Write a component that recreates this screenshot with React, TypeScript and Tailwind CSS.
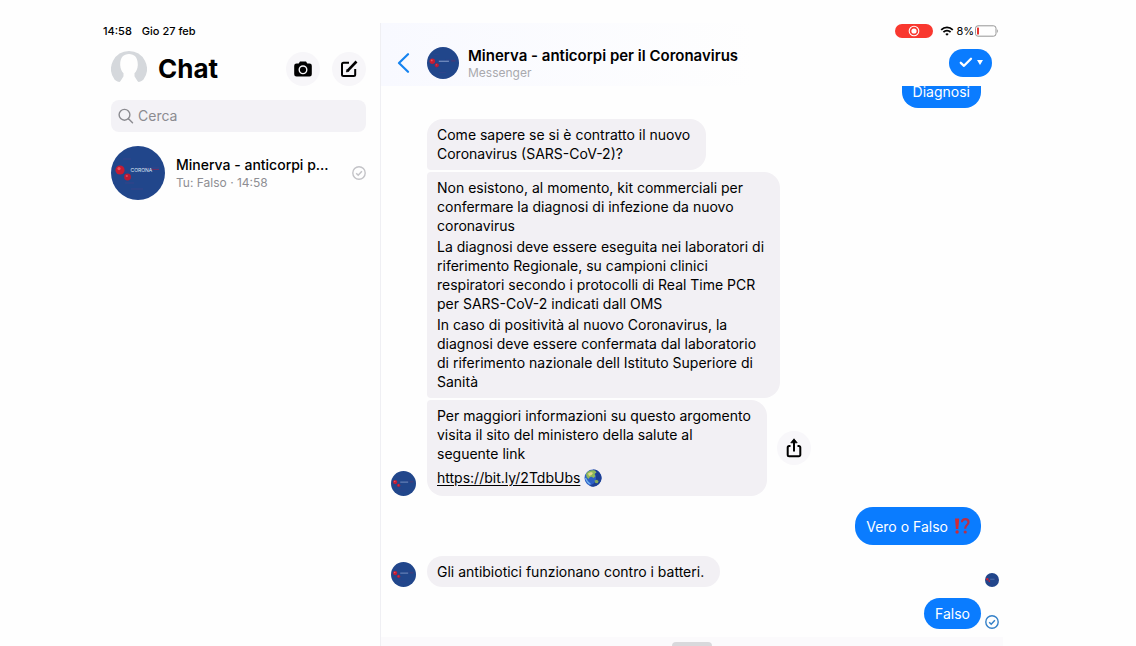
import { useState } from "react";

interface Message {
  id: number;
  paragraphs: string[];
  link?: string;
  shape: string;
}

const answers: Message[] = [
  {
    id: 1,
    paragraphs: ["Come sapere se si è contratto il nuovo\nCoronavirus (SARS-CoV-2)?"],
    shape: "rounded-2xl rounded-bl-sm",
  },
  {
    id: 2,
    paragraphs: [
      "Non esistono, al momento, kit commerciali per\nconfermare la diagnosi di infezione da nuovo\ncoronavirus",
      "La diagnosi deve essere eseguita nei laboratori di\nriferimento Regionale, su campioni clinici\nrespiratori secondo i protocolli di Real Time PCR\nper SARS-CoV-2 indicati dall OMS",
      "In caso di positività al nuovo Coronavirus, la\ndiagnosi deve essere confermata dal laboratorio\ndi riferimento nazionale dell Istituto Superiore di\nSanità",
    ],
    shape: "rounded-2xl rounded-l-sm",
  },
  {
    id: 3,
    paragraphs: [
      "Per maggiori informazioni su questo argomento\nvisita il sito del ministero della salute al\nseguente link",
    ],
    link: "https://bit.ly/2TdbUbs",
    shape: "rounded-2xl rounded-tl-sm",
  },
];

const PageLogo: React.FC<{ className: string; label?: boolean }> = ({ className, label }) => (
  <svg viewBox="0 0 54 54" className={`shrink-0 rounded-full ${className}`} aria-hidden="true">
    <rect width="54" height="54" fill="#21468b" />
    <path d="M14 37h9M32 22h16M20 43h12M12 13h8" stroke="#3c4289" strokeWidth="0.8" />
    <circle cx="9" cy="24" r="4.6" fill="#c41c33" />
    <circle cx="8" cy="22.6" r="1.6" fill="#f0505a" />
    <circle cx="16.5" cy="31" r="3.4" fill="#b81a35" />
    <circle cx="15.8" cy="30" r="1.1" fill="#e4485a" />
    {label ? (
      <text x="19.5" y="25.5" fontSize="5" fill="#dfe6f5" fontFamily="Inter, sans-serif">
        CORONA
      </text>
    ) : (
      <path d="M20 24h17" stroke="#8fa5d3" strokeWidth="1.6" />
    )}
    <path d="M41 23.5h7" stroke="#6b2f64" strokeWidth="1.2" />
  </svg>
);

const Globe: React.FC = () => (
  <svg viewBox="0 0 18 18" className="size-[18px]" aria-label="globo">
    <circle cx="9" cy="9" r="8.5" fill="#2d5fc4" />
    <path d="M9 .5a8.5 8.5 0 0 1 6 14.5 8.5 8.5 0 0 1-10 1.5c6-1 10-6 4-16z" fill="#1d3f93" />
    <path d="M2 5C4 1.500 8 .8 11 1.600l1.500 2-2 1.400 1 2.200-2 1.800-1.800-1.300-2 .6L4.500 10 2.600 8z" fill="#8fb85a" />
    <path d="M4 4.500 7 3l2 1-1.500 2L5 7z" fill="#e1d98a" />
    <path d="m10.500 11.500 2.500-.8 1.600 1.500-1 2-2.300-.3z" fill="#86ac5c" />
    <path d="M1.500 9c1 3 2.500 5 5 6.200" stroke="#75b5ee" strokeWidth="1.2" fill="none" />
  </svg>
);

const ExclamationQuestion: React.FC = () => (
  <svg viewBox="0 0 16 18" className="h-[18px] w-4" aria-label="punto esclamativo e interrogativo">
    <path d="M1 1.500h4.200L4.300 12H1.900z" fill="#d02a35" />
    <circle cx="3.1" cy="15" r="1.7" fill="#d02a35" />
    <path
      d="M8 5.200C8 3.200 9.400 2.200 11.200 2.200s3.300 1 3.300 3c0 2.600-3.200 3-3.200 5.800v.8"
      stroke="#b82f47"
      strokeWidth="2.2"
      fill="none"
    />
    <circle cx="11.2" cy="15" r="1.6" fill="#b82f47" />
  </svg>
);

const CheckCircle: React.FC<{ className: string }> = ({ className }) => (
  <svg viewBox="0 0 14 14" fill="none" stroke="currentColor" className={`size-3.5 shrink-0 ${className}`} aria-hidden="true">
    <circle cx="7" cy="7" r="6.2" strokeWidth="1.4" />
    <path d="m4.200 7.200 2 2 3.700-4" strokeWidth="1.5" />
  </svg>
);

const App: React.FC = () => {
  const [search, setSearch] = useState<string>("");

  return (
    <div className="flex h-screen overflow-hidden bg-[#fefefe] pt-[23px] pr-[133px] pl-[103px] font-[Inter,sans-serif] text-black">
      {/* Conversation list */}
      <aside className="flex w-[278px] shrink-0 flex-col border-r border-[#efeff3]">
        <div className="flex h-4 items-center gap-2.5 text-[11px] font-medium">
          <span>14:58</span>
          <span>Gio 27 feb</span>
        </div>

        <div className="mt-3 flex h-9 items-center pl-2">
          <svg viewBox="0 0 36 36" className="size-9 shrink-0" aria-hidden="true">
            <path
              d="M18 0a18 18 0 0 1 14.500 28.500c-1.500 1.500-3.500 2.500-5 2.500-1.500-1-2.500-3.500-4-5.700v-3c2-2 3-4.500 3.300-8C27 6.500 23.500 3 18 3S9 6.500 9.200 14.300c.3 3.500 1.300 6 3.300 8v3c-1.500 2.200-2.500 4.700-4 5.700-1.500 0-3.500-1-5-2.500A18 18 0 0 1 18 0z"
              fill="#d5d8dc"
            />
          </svg>
          <h1 className="ml-[11px] flex-1 text-[26px] leading-9 font-bold">Chat</h1>
          <div className="mr-3.5 flex gap-3">
            <button aria-label="Fotocamera" className="flex size-[34px] items-center justify-center rounded-full bg-[#f7f6f9]">
              <svg viewBox="0 0 18 16" className="h-4 w-[18px]">
                <path
                  d="M6 .5h6l1.300 2H15.500A2.300 2.300 0 0 1 17.800 4.800v8.400a2.300 2.300 0 0 1-2.300 2.300h-13A2.300 2.300 0 0 1 .2 13.200V4.800a2.300 2.300 0 0 1 2.300-2.300h2.200z"
                  fill="#000"
                />
                <circle cx="9" cy="8.8" r="3.8" fill="none" stroke="#f7f6f9" strokeWidth="1.4" />
              </svg>
            </button>
            <button aria-label="Nuovo messaggio" className="flex size-[34px] items-center justify-center rounded-full bg-[#f7f6f9]">
              <svg viewBox="0 0 18 18" className="size-[18px]" fill="none" stroke="#000" strokeWidth="2" strokeLinejoin="round">
                <path d="M9 2.800H3.500A1.500 1.500 0 0 0 2 4.300v10.200A1.500 1.500 0 0 0 3.500 16h10.200a1.500 1.500 0 0 0 1.500-1.500V9" />
                <path d="m7.500 10.800 9-9.300" strokeWidth="2.6" />
                <path d="m6.300 12 .6-2.400 1.800 1.800z" fill="#000" strokeWidth="0.6" />
              </svg>
            </button>
          </div>
        </div>

        <label className="mt-[13px] mr-3.5 ml-2 flex h-8 items-center gap-[3px] rounded-lg bg-[#f3f2f6] pl-1.5 text-[#8b8b90]">
          <svg viewBox="0 0 18 18" className="size-[18px] shrink-0" fill="none" stroke="currentColor" strokeWidth="1.4" strokeLinecap="round">
            <circle cx="7.5" cy="7.8" r="5.4" />
            <path d="m11.500 11.800 4 4" />
          </svg>
          <input
            type="text"
            aria-label="Cerca"
            value={search}
            onChange={(e) => setSearch(e.target.value)}
            placeholder="Cerca"
            className="w-full min-w-0 bg-transparent text-sm outline-none placeholder:text-[#8b8b90]"
          />
        </label>

        <a href="#minerva" className="mt-3.5 mr-3.5 ml-2 flex items-center">
          <PageLogo className="size-[54px]" label />
          <div className="ml-[11px] min-w-0 flex-1">
            <p className="text-sm leading-5 font-medium whitespace-nowrap">Minerva - anticorpi p...</p>
            <p className="text-xs text-[#8e8e93]">Tu: Falso · 14:58</p>
          </div>
          <CheckCircle className="text-[#c3c3c7]" />
        </a>
      </aside>

      {/* Open conversation */}
      <main className="flex min-w-0 flex-1 flex-col">
        <header className="shrink-0 bg-linear-to-r from-[#f8f9ff] to-[#fefefe] to-60%">
          <div className="flex h-4 items-center justify-end pr-1 text-[11px]">
            <span className="flex h-3.5 w-[38px] items-center justify-center rounded-full bg-[#f9382f]">
              <svg viewBox="0 0 12 12" className="size-3" aria-hidden="true">
                <circle cx="6" cy="6" r="4.8" fill="none" stroke="#fff" strokeWidth="1.1" />
                <circle cx="6" cy="6" r="2.6" fill="#fff" />
              </svg>
            </span>
            <svg viewBox="0 0 14 10" className="mr-0.5 ml-[7px] h-2.5 w-3.5" fill="none" stroke="#000" strokeWidth="1.8" aria-hidden="true">
              <path d="M1.200 3.800a8.200 8.200 0 0 1 11.600 0M3.400 6.200a5.200 5.200 0 0 1 7.200 0" />
              <path d="M5.300 8 7 9.800 8.700 8a2.400 2.400 0 0 0-3.400 0z" fill="#000" stroke="none" />
            </svg>
            <span>8%</span>
            <svg viewBox="0 0 24 12" className="ml-px h-3 w-6" aria-hidden="true">
              <rect x="0.5" y="0.8" width="20.5" height="10.4" rx="2.5" fill="none" stroke="#8a8a8a" strokeWidth="0.9" />
              <rect x="2" y="2.5" width="2" height="7" rx="0.6" fill="#e8342f" />
              <path d="M22.300 4.200v3.600c1-.4 1-3.200 0-3.600z" fill="#8a8a8a" />
            </svg>
          </div>
          <div className="flex h-[47px] items-center pr-[11px] pl-4">
            <button aria-label="Indietro">
              <svg viewBox="0 0 14 20" className="h-5 w-3.5" fill="none" stroke="#1583f0" strokeWidth="2.2" strokeLinecap="round" strokeLinejoin="round">
                <path d="M11 1.200 2 10l9 8.800" />
              </svg>
            </button>
            <PageLogo className="ml-4 size-8" />
            <div className="ml-[9px] min-w-0 flex-1 pt-0.5">
              <h2 className="text-[15px] leading-[18px] font-semibold">Minerva - anticorpi per il Coronavirus</h2>
              <p className="text-xs leading-4 text-[#a9a9ae]">Messenger</p>
            </div>
            <button aria-label="Opzioni" className="flex h-7 w-[43px] items-center justify-center gap-1 rounded-full bg-[#0a7cff]">
              <svg viewBox="0 0 14 11" className="h-[11px] w-3.5" fill="none" stroke="#fff" strokeWidth="2.3" strokeLinecap="round" strokeLinejoin="round">
                <path d="m1.800 5.800 3.200 3 7-7" />
              </svg>
              <svg viewBox="0 0 6 5" className="h-[5px] w-1.5">
                <path d="M0 0h6L3 5z" fill="#fff" />
              </svg>
            </button>
          </div>
        </header>

        <section className="flex flex-1 flex-col overflow-hidden pr-1 pl-2.5 text-sm leading-[19px]">
          {/* Only the lower part of this bubble shows below the header */}
          <div className="mr-[18px] self-end rounded-b-2xl bg-[#0a7cff] px-[11px] pb-2.5 leading-3 text-white">Diagnosi</div>

          <div className="mt-[11px] flex items-end gap-[11px]">
            <PageLogo className="size-[25px]" />
            <div className="flex flex-col items-start gap-0.5">
              {answers.map((message) => (
                <div key={message.id} className="flex items-center gap-2.5">
                  <div className={`flex flex-col gap-0.5 bg-[#f2f0f4] pt-1.5 pr-4 pb-[7px] pl-2.5 ${message.shape}`}>
                    {message.paragraphs.map((text) => (
                      <p key={text} className="whitespace-pre-line">
                        {text}
                      </p>
                    ))}
                    {message.link && (
                      <p className="mt-0.5 flex items-center gap-1 leading-[22px]">
                        <a href={message.link} className="underline underline-offset-2">
                          {message.link}
                        </a>
                        <Globe />
                      </p>
                    )}
                  </div>
                  {message.link && (
                    <button aria-label="Condividi" className="flex size-[34px] items-center justify-center rounded-full bg-[#f8f7fa]">
                      <svg viewBox="0 0 16 20" className="h-5 w-4" fill="none" stroke="#000" strokeWidth="2" strokeLinejoin="round">
                        <path d="M4.500 8H3.200A1.500 1.500 0 0 0 1.700 9.500v7.300a1.500 1.500 0 0 0 1.500 1.500h9.600a1.500 1.500 0 0 0 1.500-1.500V9.500A1.500 1.500 0 0 0 12.800 8h-1.300" />
                        <path d="M8 13.500V3" />
                        <path d="M4.800 4.800 8 .8l3.200 4z" fill="#000" strokeWidth="0.8" />
                      </svg>
                    </button>
                  )}
                </div>
              ))}
            </div>
          </div>

          <div className="mt-[11px] mr-[18px] flex h-[38px] items-center gap-1.5 self-end rounded-[18px] bg-[#0a7cff] px-[11px] text-white">
            <span>Vero o Falso</span>
            <ExclamationQuestion />
          </div>

          <div className="mt-[11px] flex items-end gap-[11px]">
            <PageLogo className="size-[25px]" />
            <p className="rounded-2xl bg-[#f2f0f4] py-1.5 pr-4 pl-2.5">Gli antibiotici funzionano contro i batteri.</p>
            <PageLogo className="ml-auto size-3.5" />
          </div>

          <div className="mt-[11px] flex items-end justify-end gap-1">
            <div className="rounded-2xl bg-[#0a7cff] px-[11px] py-1.5 text-white">Falso</div>
            <CheckCircle className="text-[#3480c8]" />
          </div>
        </section>

        <footer className="flex h-[9px] shrink-0 items-end justify-center bg-[#fbfafc]">
          <div className="h-1 w-10 rounded-t-sm bg-[#d9d9dc]" />
        </footer>
      </main>
    </div>
  );
};

export default App;
